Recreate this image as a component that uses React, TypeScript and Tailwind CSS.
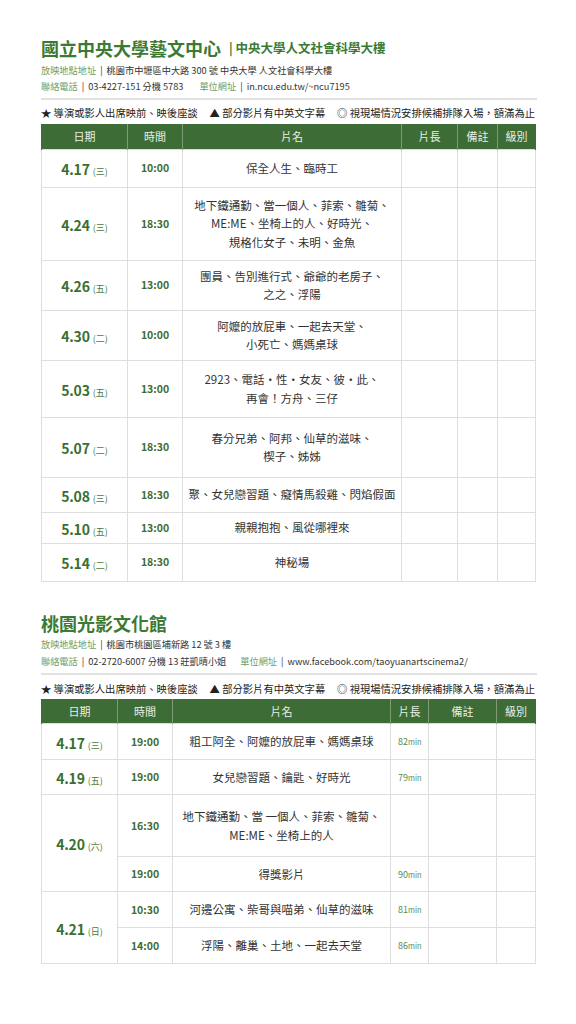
import React from "react";

type Row1 = { d: string; w: string; t: string; h: number; titles: string[] };

const rows1: Row1[] = [
  { d: "4.17", w: "三", t: "10:00", h: 38, titles: ["保全人生、臨時工"] },
  {
    d: "4.24",
    w: "三",
    t: "18:30",
    h: 73,
    titles: ["地下鐵通勤、當一個人、菲索、雛菊、", "ME:ME、坐椅上的人、好時光、", "規格化女子、未明、金魚"],
  },
  { d: "4.26", w: "五", t: "13:00", h: 50, titles: ["團員、告別進行式、爺爺的老房子、", "之之、浮陽"] },
  { d: "4.30", w: "二", t: "10:00", h: 50, titles: ["阿嬤的放屁車、一起去天堂、", "小死亡、媽媽桌球"] },
  { d: "5.03", w: "五", t: "13:00", h: 57, titles: ["2923、電話·性·女友、彼·此、", "再會！方舟、三仔"] },
  { d: "5.07", w: "二", t: "18:30", h: 60, titles: ["春分兄弟、阿邦、仙草的滋味、", "楔子、姊姊"] },
  { d: "5.08", w: "三", t: "18:30", h: 35, titles: ["聚、女兒戀習題、癡情馬殺雞、閃焰假面"] },
  { d: "5.10", w: "五", t: "13:00", h: 31, titles: ["親親抱抱、風從哪裡來"] },
  { d: "5.14", w: "二", t: "18:30", h: 38, titles: ["神秘場"] },
];

const FONT = { fontFamily: '"Noto Sans CJK TC", "Noto Sans", sans-serif' };

function DateCell({ d, w, rowSpan }: { d: string; w: string; rowSpan?: number }) {
  return (
    <td rowSpan={rowSpan} className="border border-[#dedede] text-center align-middle leading-none">
      <span className="text-[14px] font-bold text-[#3b6f31] tracking-[-0.2px]">{d}</span>
      <span className="ml-[3px] text-[9px] text-[#4a7a40]">({w})</span>
    </td>
  );
}

function TimeCell({ t }: { t: string }) {
  return (
    <td className="border border-[#dedede] text-center align-middle text-[10.5px] font-semibold text-[#3f6c34]">
      {t}
    </td>
  );
}

function TitleCell({ titles }: { titles: string[] }) {
  return (
    <td className="border border-[#dedede] text-center align-middle text-[11.5px] leading-[18.5px] text-[#333]">
      {titles.map((x, i) => (
        <div key={i}>{x}</div>
      ))}
    </td>
  );
}

function LenCell({ len }: { len?: string }) {
  return (
    <td className="border border-[#dedede] pl-[7px] align-middle text-[9px] leading-none text-[#5a8a4e]">
      {len ? (
        <span>
          {len}
          <span className="text-[7.5px]">min</span>
        </span>
      ) : null}
    </td>
  );
}

function Empty() {
  return <td className="border border-[#dedede]" />;
}

function Header() {
  const labels = ["日期", "時間", "片名", "片長", "備註", "級別"];
  return (
    <tr className="h-[25px] bg-[#3e6c36]">
      {labels.map((l) => (
        <th
          key={l}
          className="border-x border-[#7d9b75] first:border-l-[#3e6c36] last:border-r-[#3e6c36] text-center align-middle text-[11px] font-normal text-[#e8efe5]"
        >
          {l}
        </th>
      ))}
    </tr>
  );
}

function Notes() {
  return (
    <div className="flex h-[16px] w-[494px] items-center justify-between text-[10.3px] leading-[16px] text-[#222]">
      <span>★ 導演或影人出席映前、映後座談</span>
      <span>▲ 部分影片有中英文字幕</span>
      <span>◎ 視現場情況安排候補排隊入場，額滿為止</span>
    </div>
  );
}

function Label({ children }: { children: React.ReactNode }) {
  return <span className="text-[#6f9d63]">{children}</span>;
}

function Sep() {
  return <span className="mx-[4px]">|</span>;
}

export default function App() {
  return (
    <div className="min-h-[1024px] w-[576px] bg-white pl-[41px] pt-[36px]" style={FONT}>
      {/* Section 1 */}
      <div className="flex h-[24px] items-center">
        <span className="text-[18px] font-bold leading-[24px] text-[#3b7a33]">國立中央大學藝文中心</span>
        <span className="ml-[8px] text-[12.5px] font-bold leading-[24px] text-[#3b7a33]">| 中央大學人文社會科學大樓</span>
      </div>
      <div className="mt-[2px] h-[16px] text-[9.2px] leading-[16px] text-[#333]">
        <Label>放映地點地址</Label>
        <Sep />
        桃園市中壢區中大路 300 號 中央大學 人文社會科學大樓
      </div>
      <div className="h-[16px] text-[9.2px] leading-[16px] text-[#333]">
        <Label>聯絡電話</Label>
        <Sep />
        03-4227-151 分機 5783<span className="ml-[16px]" />
        <Label>單位網址</Label>
        <Sep />
        in.ncu.edu.tw/~ncu7195
      </div>
      <div className="mt-[4px] h-[2px] w-[496px] bg-[#e2e2e2]" />
      <div className="mt-[5px]">
        <Notes />
      </div>
      <table className="mt-[3px] w-[494px] table-fixed border-collapse">
        <colgroup>
          <col className="w-[86px]" />
          <col className="w-[55px]" />
          <col className="w-[219px]" />
          <col className="w-[56px]" />
          <col className="w-[40px]" />
          <col className="w-[38px]" />
        </colgroup>
        <thead>
          <Header />
        </thead>
        <tbody>
          {rows1.map((r) => (
            <tr key={r.d} style={{ height: r.h }}>
              <DateCell d={r.d} w={r.w} />
              <TimeCell t={r.t} />
              <TitleCell titles={r.titles} />
              <Empty />
              <Empty />
              <Empty />
            </tr>
          ))}
        </tbody>
      </table>

      {/* Section 2 */}
      <div className="mt-[29px] flex h-[24px] items-center">
        <span className="text-[18px] font-bold leading-[24px] text-[#3b7a33]">桃園光影文化館</span>
      </div>
      <div className="mt-[1px] h-[16px] text-[9.2px] leading-[16px] text-[#333]">
        <Label>放映地點地址</Label>
        <Sep />
        桃園市桃園區埔新路 12 號 3 樓
      </div>
      <div className="mt-[1px] h-[16px] text-[9.2px] leading-[16px] text-[#333]">
        <Label>聯絡電話</Label>
        <Sep />
        02-2720-6007 分機 13 莊凱晴小姐<span className="ml-[14px]" />
        <Label>單位網址</Label>
        <Sep />
        www.facebook.com/taoyuanartscinema2/
      </div>
      <div className="mt-[4px] h-[2px] w-[496px] bg-[#e2e2e2]" />
      <div className="mt-[6px]">
        <Notes />
      </div>
      <table className="mt-[2px] w-[494px] table-fixed border-collapse">
        <colgroup>
          <col className="w-[76px]" />
          <col className="w-[55px]" />
          <col className="w-[218px]" />
          <col className="w-[38px]" />
          <col className="w-[68px]" />
          <col className="w-[39px]" />
        </colgroup>
        <thead>
          <Header />
        </thead>
        <tbody>
          <tr className="h-[36px]">
            <DateCell d="4.17" w="三" />
            <TimeCell t="19:00" />
            <TitleCell titles={["粗工阿全、阿嬤的放屁車、媽媽桌球"]} />
            <LenCell len="82" />
            <Empty />
            <Empty />
          </tr>
          <tr className="h-[35px]">
            <DateCell d="4.19" w="五" />
            <TimeCell t="19:00" />
            <TitleCell titles={["女兒戀習題、鑰匙、好時光"]} />
            <LenCell len="79" />
            <Empty />
            <Empty />
          </tr>
          <tr className="h-[62px]">
            <DateCell d="4.20" w="六" rowSpan={2} />
            <TimeCell t="16:30" />
            <TitleCell titles={["地下鐵通勤、當 一個人、菲索、雛菊、", "ME:ME、坐椅上的人"]} />
            <LenCell />
            <Empty />
            <Empty />
          </tr>
          <tr className="h-[35px]">
            <TimeCell t="19:00" />
            <TitleCell titles={["得獎影片"]} />
            <LenCell len="90" />
            <Empty />
            <Empty />
          </tr>
          <tr className="h-[36px]">
            <DateCell d="4.21" w="日" rowSpan={2} />
            <TimeCell t="10:30" />
            <TitleCell titles={["河邊公寓、柴哥與喵弟、仙草的滋味"]} />
            <LenCell len="81" />
            <Empty />
            <Empty />
          </tr>
          <tr className="h-[36px]">
            <TimeCell t="14:00" />
            <TitleCell titles={["浮陽、離巢、土地、一起去天堂"]} />
            <LenCell len="86" />
            <Empty />
            <Empty />
          </tr>
        </tbody>
      </table>
    </div>
  );
}
